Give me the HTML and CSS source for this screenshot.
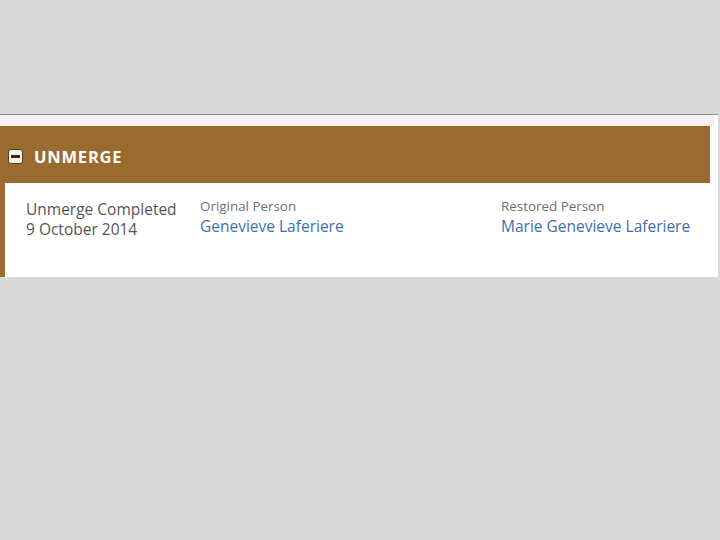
FILE: index.html
```html
<!DOCTYPE html>
<html>
<head>
<meta charset="utf-8">
<link rel="stylesheet" href="styles.css">
</head>
<body>
<div class="page">
  <div class="panel">
    <div class="strip"></div>
    <div class="header">
      <span class="toggle"><span class="bar"></span></span>
      <span class="title">UNMERGE</span>
    </div>
    <div class="body">
      <div class="col c1">
        <div class="status">Unmerge Completed</div>
        <div class="status">9 October 2014</div>
      </div>
      <div class="col c2">
        <div class="label">Original Person</div>
        <a class="link">Genevieve Laferiere</a>
      </div>
      <div class="col c3">
        <div class="label">Restored Person</div>
        <a class="link">Marie Genevieve Laferiere</a>
      </div>
    </div>
  </div>
</div>
</body>
</html>
```
FILE: styles.css
```css
html, body {
  margin: 0;
  padding: 0;
  background: #d9d9d9;
  font-family: "Open Sans", "Liberation Sans", sans-serif;
}
.page {
  width: 720px;
  height: 540px;
  padding-top: 114px;
  box-sizing: border-box;
}
.panel {
  width: 718px;
  background: #ffffff;
  border-top: 1px solid #8c8c8c;
}
.strip {
  height: 11px;
  background: #f4f1f1;
  margin-right: 4px;
}
.header {
  height: 57px;
  width: 710px;
  background: #9a6b2f;
  display: flex;
  align-items: center;
  box-sizing: border-box;
  padding-left: 8px;
  padding-top: 4px;
}
.toggle {
  width: 13px;
  height: 13px;
  background: #f7f3ee;
  border: 1px solid #5a3d18;
  border-radius: 3px;
  display: flex;
  align-items: center;
  justify-content: center;
  margin-right: 11px;
}
.bar {
  width: 9px;
  height: 3px;
  background: #3b2a18;
}
.title {
  color: #ffffff;
  font-weight: 700;
  font-size: 16.5px;
  letter-spacing: 0.8px;
}
.body {
  height: 94px;
  border-left: 5px solid #9a6b2f;
  display: grid;
  grid-template-columns: 174px 301px 1fr;
  padding-left: 21px;
  padding-top: 16px;
  box-sizing: border-box;
}
.status {
  font-size: 15.5px;
  line-height: 20px;
  color: #555555;
}
.label {
  font-size: 13.4px;
  line-height: 19px;
  color: #707070;
  margin-top: -2px;
}
.link {
  display: block;
  font-size: 15.5px;
  line-height: 21px;
  color: #3f6fb0;
}
```
